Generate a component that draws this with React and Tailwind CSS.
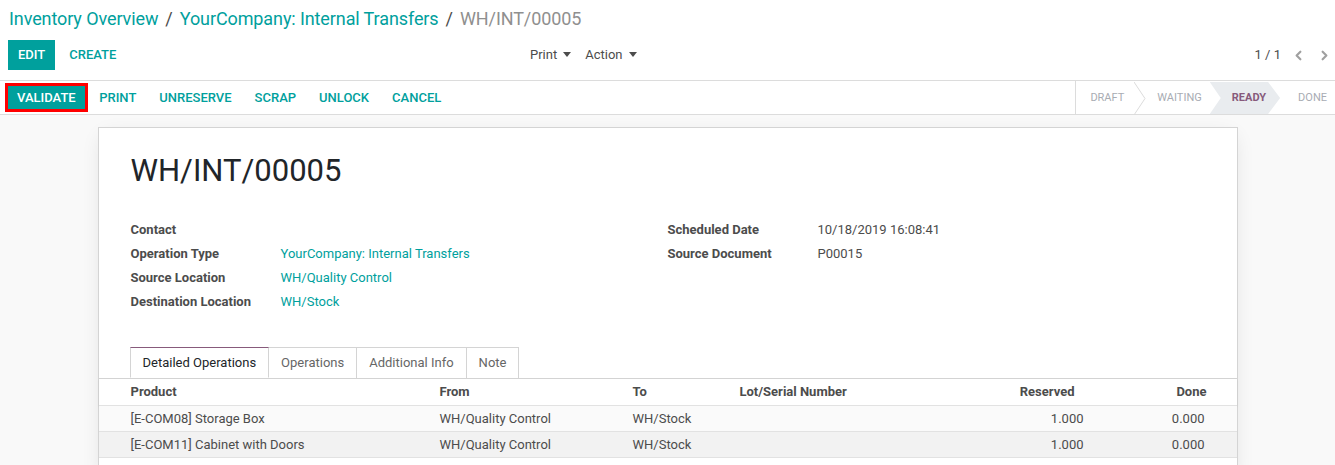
import React from "react";
import { ChevronLeft, ChevronRight } from "lucide-react";

const fields = [
  { label: "Contact", value: "" },
  { label: "Operation Type", value: "YourCompany: Internal Transfers", link: true },
  { label: "Source Location", value: "WH/Quality Control", link: true },
  { label: "Destination Location", value: "WH/Stock", link: true },
];

const rightFields = [
  { label: "Scheduled Date", value: "10/18/2019 16:08:41" },
  { label: "Source Document", value: "P00015" },
];

const lines = [
  { product: "[E-COM08] Storage Box", from: "WH/Quality Control", to: "WH/Stock", reserved: "1.000", done: "0.000" },
  { product: "[E-COM11] Cabinet with Doors", from: "WH/Quality Control", to: "WH/Stock", reserved: "1.000", done: "0.000" },
];

const Caret = () => (
  <span className="ml-[6px] inline-block w-0 h-0 border-l-[4px] border-r-[4px] border-t-[5px] border-l-transparent border-r-transparent border-t-[#4c4c4c] align-middle mb-[3px]" />
);

const FieldRow = ({ label, value, link }) => (
  <div className="flex h-[24px] items-center">
    <div className="w-[150px] font-bold text-[#4c4c4c]">{label}</div>
    <div className={link ? "text-[#00a09d]" : "text-[#4c4c4c]"}>{value}</div>
  </div>
);

export default function App() {
  return (
    <div
      className="min-h-screen bg-[#f9f9f9] text-[13px] text-[#4c4c4c] overflow-hidden"
      style={{ fontFamily: "Roboto, 'Liberation Sans', sans-serif" }}
    >
      {/* Control panel */}
      <div className="bg-white border-b border-[#dcdcdc]">
        <div className="px-[9px] pt-[6px] text-[18px] leading-[26px] flex items-center gap-[7px]">
          <span className="text-[#00a09d] tracking-[-0.1px]">Inventory Overview</span>
          <span className="text-[#4c4c4c]">/</span>
          <span className="text-[#00a09d] tracking-[-0.1px]">YourCompany: Internal Transfers</span>
          <span className="text-[#4c4c4c]">/</span>
          <span className="text-[#8f8f8f] tracking-[-0.1px]">WH/INT/00005</span>
        </div>
        <div className="flex items-center h-[30px] mt-[8px] mb-[10px] pl-[8px] pr-[3px]">
          <div className="flex items-center w-[522px]">
            <button className="h-[30px] px-[10px] bg-[#00a09d] text-white font-medium uppercase">
              Edit
            </button>
            <button className="h-[30px] px-[14px] text-[#00a09d] font-medium uppercase">
              Create
            </button>
          </div>
          <div className="flex items-center gap-[14px]">
            <span>
              Print
              <Caret />
            </span>
            <span>
              Action
              <Caret />
            </span>
          </div>
          <div className="ml-auto flex items-center">
            <span className="mr-[10px]">1 / 1</span>
            <ChevronLeft size={15} strokeWidth={3.5} className="text-[#a0a0a0] mr-[11px]" />
            <ChevronRight size={15} strokeWidth={3.5} className="text-[#a0a0a0]" />
          </div>
        </div>
      </div>

      {/* Status bar */}
      <div className="bg-white border-b border-[#dcdcdc] flex items-center h-[34px]">
        <div className="flex items-center pl-[5px]">
          <button className="h-[29px] px-[9px] bg-[#00a09d] text-white font-medium uppercase border-[3px] border-[#ff0000]">
            Validate
          </button>
          {["Print", "Unreserve", "Scrap", "Unlock", "Cancel"].map((b) => (
            <button key={b} className="h-[29px] px-[11.5px] text-[#00a09d] font-medium uppercase">
              {b}
            </button>
          ))}
        </div>
        <div className="ml-auto flex h-full items-stretch border-l border-[#dcdcdc] text-[11px] uppercase text-[#a8acb3] pt-px">
          <div className="flex items-center pl-[14px] pr-[10px]">Draft</div>
          <svg width="12" height="33" viewBox="0 0 12 33" className="self-stretch">
            <polyline points="0,0 11,16.5 0,33" fill="none" stroke="#dcdcdc" strokeWidth="1" />
          </svg>
          <div className="flex items-center pl-[11px] pr-[8px]">Waiting</div>
          <div className="flex items-center pl-[22px] pr-[14px] bg-[#e9ecef] font-bold text-[#875a7b] [clip-path:polygon(0_0,calc(100%-12px)_0,100%_50%,calc(100%-12px)_100%,0_100%,11px_50%)]">
            Ready
          </div>
          <div className="flex items-center pl-[18px] pr-[8px]">Done</div>
        </div>
      </div>

      {/* Sheet */}
      <div className="w-[1140px] mx-auto mt-[12px] bg-white border border-[#d4d4d4] shadow-[0_5px_20px_-5px_rgba(0,0,0,0.12)]">
        <div className="px-[32px] pt-[23px]">
          <h1 className="text-[31px] leading-[40px] text-[#212529]">WH/INT/00005</h1>
          <div className="flex mt-[27px]">
            <div className="w-1/2">
              {fields.map((f) => (
                <FieldRow key={f.label} {...f} />
              ))}
            </div>
            <div className="w-1/2">
              {rightFields.map((f) => (
                <FieldRow key={f.label} {...f} />
              ))}
            </div>
          </div>
        </div>

        {/* Notebook */}
        <div className="mt-[33px] flex pl-[31px] border-b border-[#d4d4d4]">
          <div className="h-[31px] px-[12px] flex items-center border border-[#d4d4d4] border-t-[#875a7b] border-b-white -mb-px bg-white text-[#212529]">
            Detailed Operations
          </div>
          {["Operations", "Additional Info", "Note"].map((t) => (
            <div key={t} className="h-[31px] px-[12px] flex items-center border border-l-0 border-b-0 border-[#d4d4d4] text-[#666]">
              {t}
            </div>
          ))}
        </div>

        <div>
          <div className="flex items-center h-[27px] pl-[32px] pr-[30px] font-bold border-b border-[#e2e2e2] shadow-[0_1px_2px_rgba(0,0,0,0.06)]">
            <div className="w-[309px]">Product</div>
            <div className="w-[193px]">From</div>
            <div className="w-[107px]">To</div>
            <div className="flex-1">Lot/Serial Number</div>
            <div className="w-[120px] text-right pr-[9px]">Reserved</div>
            <div className="w-[123px] text-right">Done</div>
          </div>
          {lines.map((l, i) => (
            <div
              key={l.product}
              className={`flex items-center h-[26px] pl-[32px] pr-[32px] border-b border-[#e2e2e2] ${i % 2 === 0 ? "bg-[#fafafa]" : "bg-[#f2f2f2]"}`}
            >
              <div className="w-[309px]">{l.product}</div>
              <div className="w-[193px]">{l.from}</div>
              <div className="w-[107px]">{l.to}</div>
              <div className="flex-1"></div>
              <div className="w-[120px] text-right">{l.reserved}</div>
              <div className="w-[121px] text-right">{l.done}</div>
            </div>
          ))}
          <div className="h-[20px]" />
        </div>
      </div>
    </div>
  );
}
